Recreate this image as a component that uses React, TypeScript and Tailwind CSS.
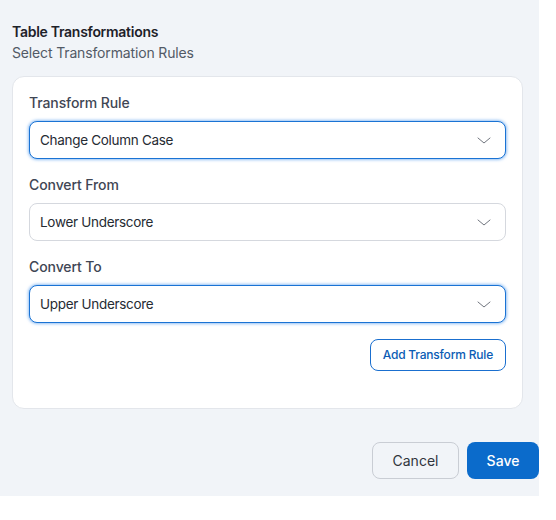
import React from "react";

function Chevron() {
  return (
    <svg width="14" height="7" viewBox="0 0 14 7" fill="none" className="shrink-0">
      <path d="M1 1l6 5 6-5" stroke="#70757e" strokeWidth="1" strokeLinecap="round" strokeLinejoin="round" />
    </svg>
  );
}

function Field({ label, value, focused }: { label: string; value: string; focused?: boolean }) {
  return (
    <div className="flex flex-col gap-2">
      <div className="text-[14px] leading-5 font-medium text-[#3f4654] tracking-[-0.1px]">{label}</div>
      <div
        className={
          focused
            ? "h-[38px] rounded-lg border border-[#1a73d4] bg-white flex items-center justify-between pl-[10px] pr-[14px] shadow-[0_0_3px_1px_rgba(56,140,235,0.55)]"
            : "h-[38px] rounded-lg border border-[#d5d8de] bg-white flex items-center justify-between pl-[10px] pr-[14px]"
        }
      >
        <span className="text-[13.5px] text-[#262b33] tracking-[-0.3px] pt-px">{value}</span>
        <Chevron />
      </div>
    </div>
  );
}

export default function App() {
  return (
    <div
      className="w-[539px] h-[496px] bg-[#f1f4f8] px-3 pt-[22px] flex flex-col"
      style={{ fontFamily: "Inter, 'Noto Sans', sans-serif" }}
    >
      <div className="text-[14px] leading-5 font-semibold text-[#1d2129] tracking-[-0.28px]">Table Transformations</div>
      <div className="text-[14px] leading-5 text-[#525a66] mt-px tracking-[-0.15px]">Select Transformation Rules</div>
      <div className="mt-[13px] w-[511px] bg-white border border-[#e3e6eb] rounded-xl pt-4 px-4 pb-[37px] flex flex-col gap-4">
        <Field label="Transform Rule" value="Change Column Case" focused />
        <Field label="Convert From" value="Lower Underscore" />
        <Field label="Convert To" value="Upper Underscore" focused />
        <div className="flex justify-end">
          <button className="h-8 px-[12px] rounded-lg border border-[#1a6fcf] bg-white text-[12px] font-medium text-[#0b5cb4] tracking-[-0.2px]">
            Add Transform Rule
          </button>
        </div>
      </div>
      <div className="flex justify-end gap-2 mt-[33px] -mr-3">
        <button className="h-[37px] w-[87px] rounded-lg border border-[#c9cdd4] bg-[#f1f4f8] text-[14px] text-[#30353d]">
          Cancel
        </button>
        <button className="h-[37px] w-[72px] rounded-lg bg-[#0b6bcb] text-[14px] font-medium text-white">
          Save
        </button>
      </div>
    </div>
  );
}
